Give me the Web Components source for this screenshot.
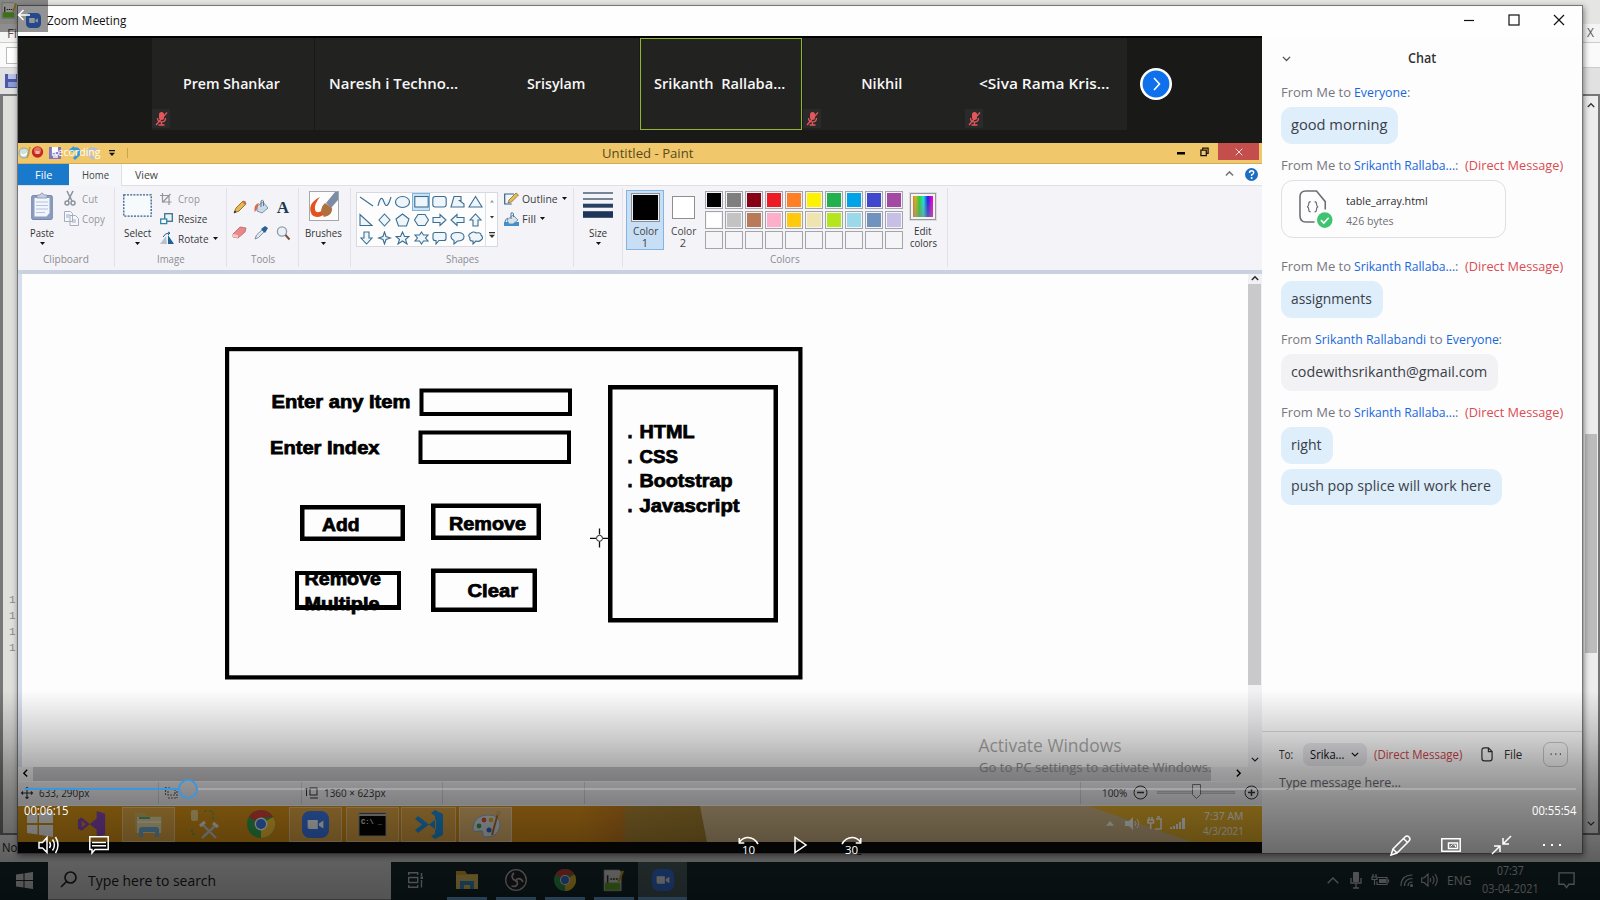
<!DOCTYPE html>
<html lang="en">
<head>
<meta charset="utf-8">
<title>Zoom Meeting</title>
<style>
html,body{margin:0;width:1600px;height:900px;overflow:hidden;font-family:"Open Sans","Noto Sans",sans-serif;font-size:12px}
</style>
</head>
<body>
<desk-top></desk-top>
<script>
const def=(name,html,init)=>customElements.define(name,class extends HTMLElement{
  connectedCallback(){ if(this.shadowRoot)return; const r=this.attachShadow({mode:"open"}); r.innerHTML=typeof html==="function"?html(this):html; if(init)init(this,r); }
});

const ZOOMCAM='<rect x="0" y="0" width="24" height="24" rx="7" fill="#3d7df0"/><path d="M5 8h9v8H6.500Q5 16 5 14.500zM15 11l4-2.500v7L15 13z" fill="#fff"/>';
const CHROME='<circle cx="12" cy="12" r="12" fill="#35a853"/><path d="M12 12L22.400 6A12 12 0 0 1 12 24z" fill="#fcc934"/><path d="M12 12L1.600 6A12 12 0 0 1 22.400 6L12 6.500z" fill="#e2443a"/><circle cx="12" cy="12" r="5.500" fill="#fff"/><circle cx="12" cy="12" r="4.300" fill="#3f7fe8"/>';
const st='fill="none" stroke="currentColor"';
const I={
 zoom:[24,24,ZOOMCAM], chrome:[24,24,CHROME],
 mute:[18,19,'<rect width="18" height="19" fill="#2a2a2a"/><rect x="7" y="3" width="5" height="8" rx="2.500" fill="#e4565c"/><path d="M5.500 9q0 4 4 4t4-4M9.500 13v3M6.500 16h6M4 16L15 3.500" fill="none" stroke="#e4565c" stroke-width="1.300"/>'],
 next:[32,32,'<circle cx="16" cy="16" r="16" fill="#fff"/><circle cx="16" cy="16" r="13.400" fill="#0e71eb"/><path d="M14 10l5.500 6-5.500 6" fill="none" stroke="#fff" stroke-width="1.600"/>'],
 min:[12,12,`<path d="M1 6.500h10" ${st} stroke-width="1.200"/>`],
 max:[12,12,`<rect x="1" y="1" width="10" height="10" ${st} stroke-width="1.200"/>`],
 close:[12,12,`<path d="M1 1l10 10M11 1L1 11" ${st} stroke-width="1.200"/>`],
 chev:[10,6,`<path d="M1 1l4 4 4-4" ${st} stroke-width="1.500"/>`],
 up:[10,6,`<path d="M1 5l4-4 4 4" ${st} stroke-width="1.700"/>`],
 left:[6,10,`<path d="M5 1L1 5l4 4" ${st} stroke-width="1.700"/>`],
 right:[6,10,`<path d="M1 1l4 4-4 4" ${st} stroke-width="1.700"/>`],
 tri:[5,3,'<path d="M0 0h5L2.500 3z" fill="currentColor"/>'],
 triup:[5,3,'<path d="M0 3h5L2.500 0z" fill="currentColor"/>'],
 more:[6,6,'<path d="M0 0h6v1.200H0zM0 2.800h6L3 6z" fill="currentColor"/>'],
 back:[14,12,`<path d="M13 6H2M6.500 1L1.500 6l5 5" ${st} stroke-width="1.500"/>`],
 restore:[10,11,`<path d="M1 3.500h6v6H1zM3 3V1.200h6v6H7.500" ${st} stroke-width="1.400"/>`],
 help:[13,13,'<circle cx="6.500" cy="6.500" r="6.500" fill="#1b6fc2"/><path d="M4.500 5q0-2.300 2.100-2.300T8.700 4.700Q8.700 6 6.600 6.800V8" fill="none" stroke="#fff" stroke-width="1.400"/><circle cx="6.600" cy="9.900" r="1" fill="#fff"/>'],
 qat:[84,16,'<circle cx="6" cy="8" r="5" fill="#cfe0dc" stroke="#8aa5a5"/><path d="M3 9q3 3 6-1" stroke="#fff" stroke-width="1.500" fill="none"/><path d="M12 2l-3 11" stroke="#c89440" stroke-width="1.500"/><circle cx="19.500" cy="7" r="5.700" fill="#c5281f"/><circle cx="19.500" cy="5.500" r="3.500" fill="#e27065"/><rect x="17.500" y="6" width="4" height="3" fill="#f2b2a8"/><rect x="31" y="2" width="12" height="12" fill="#8574bd"/><rect x="34" y="2" width="6" height="5" fill="#fff"/><rect x="35" y="9" width="5" height="4" fill="#d8d4ee"/><path d="M53 5q9-4 8 4l-5 5" fill="none" stroke="#3698d5" stroke-width="3"/><path d="M51 5l5-4v7z" fill="#3698d5"/><path d="M79 5q-9-4-8 4l5 5" fill="none" stroke="#b5bfcf" stroke-width="3"/>'],
 paste:[22,28,'<rect x=".7" y="3.500" width="20.600" height="24" rx="1.500" fill="#8c9dbf" stroke="#7587ad"/><path d="M3.500 6h15v15l-3 3.500h-12z" fill="#f1f5fc"/><path d="M5 10h12M5 13.500h12M5 17h12M5 20.500h9" stroke="#b5c3de"/><path d="M6 3h3q2-4 4 0h3v3H6z" fill="#c8d0df" stroke="#8291ab" stroke-width=".8"/>'],
 cut:[12,15,'<path d="M3 0l5 10M9 0L4 10" stroke="#8d939e" stroke-width="1.600"/><circle cx="3" cy="12" r="2" fill="none" stroke="#8d939e" stroke-width="1.500"/><circle cx="9" cy="12" r="2" fill="none" stroke="#8d939e" stroke-width="1.500"/>'],
 copy:[15,15,'<path d="M.5.500h6l2 2v8h-8zM6 4.500h5.500l3 3v7H6z" fill="#f5f7fb" stroke="#a5adbf"/><path d="M2 4h4M2 6h3M8 9h4M8 11h4" stroke="#9eacc8"/>'],
 select:[29,23,'<rect x=".8" y=".8" width="27.400" height="21.400" fill="#f7fafd" stroke="#335f86" stroke-width="1.300" stroke-dasharray="2 1.200"/>'],
 crop:[12,12,`<path d="M2.500 0v9h9M0 2.500h9V12M2.500 9.500l8-8.500" ${st} stroke-width="1.200"/>`],
 resize:[13,12,'<rect x="4.700" y=".7" width="7.600" height="7.600" fill="#e8f4fa" stroke="#3c7087" stroke-width="1.300"/><rect x=".7" y="6" width="6" height="4.600" fill="#fff" stroke="#2f84ae" stroke-width="1.300"/>'],
 rotate:[14,13,'<path d="M7 12H0L6 4z" fill="#b9c2cc"/><path d="M8 12V3l6 9z" fill="#1f6299"/><path d="M3 5q2-4 6-4M8 0l2 1-2 2" fill="none" stroke="#1f6299"/>'],
 pencil:[14,14,'<path d="M1 13l2-5 7-7q3 0 3 3l-7 7z" fill="#eab94d" stroke="#77601e" stroke-width=".8"/><path d="M9 2l3 3 1-3-2-1z" fill="#d9695d"/><path d="M1 13l.7-2.500L3.500 12z" fill="#222"/>'],
 bucket:[15,14,'<path d="M3 6l6-4 5 6-6 5-5-2z" fill="#c9dbe9" stroke="#6f8ca5" stroke-width=".9"/><path d="M7 7V1q1.500-1.500 2.500 0v5" fill="none" stroke="#61758a"/><path d="M5 3Q1 4 .5 8v4q3-2 3.500-7z" fill="#db6b45"/>'],
 letA:[14,14,'<text x="7" y="12.800" text-anchor="middle" font-family="Liberation Serif,serif" font-weight="700" font-size="17" fill="#24384d">A</text>'],
 eraser:[15,13,'<path d="M1 8l7-7 6 1-1 4-7 6-5-1z" fill="#e98789" stroke="#b96568" stroke-width=".8"/><path d="M1 8l5 1v3l-5-1z" fill="#f6c4c2"/>'],
 picker:[14,14,'<path d="M1 13l1.500-4L8 4l2 2-5.500 5.500z" fill="#dbe9f2" stroke="#75879c" stroke-width=".9"/><path d="M7 3l4 4 3-5-3-2z" fill="#276297"/>'],
 lens:[14,14,'<circle cx="6" cy="5.500" r="4.600" fill="#e9f1f7" stroke="#8c9aa9" stroke-width="1.300"/><path d="M9.500 9l4 4.500" stroke="#74543f" stroke-width="2"/>'],
 brush:[30,30,'<rect x=".5" y=".5" width="29" height="29" fill="#fdfdfd" stroke="#a5a8ab"/><path d="M11 6Q-3 13 3 24q6 5 14-2l-2-4Q8 24 6 19 5 13 11 6z" fill="#e2531f"/><path d="M29 1h-3L17 12l5 5 7-8z" fill="#7c8ca5"/><path d="M16 12q-7 6-1 14 9-2 8-9z" fill="#af713f"/>'],
 outline:[15,13,'<path d="M10 2H.7v10h7" fill="none" stroke="#2f6387" stroke-width="1.200"/><path d="M4 11l1-3 7-7 2.500 2-7 7z" fill="#e9ba55" stroke="#7a642c" stroke-width=".7"/>'],
 fill:[16,14,'<rect y="10" width="15" height="4" fill="#3f8fd1"/><path d="M3 8l6-5 5 5-5 4H5z" fill="#d5e3ed" stroke="#7189a0" stroke-width=".9"/><path d="M7 7V1q2-1 2.500 1v3M4 6Q1 7 1 10" fill="none" stroke="#55799b"/>'],
 size:[30,28,'<path d="M0 1h30M0 7h30" stroke="#4a6078" stroke-width="1.600"/><path d="M0 13.700h30" stroke="#263f63" stroke-width="4"/><path d="M0 22.500h30" stroke="#1d3558" stroke-width="6.600"/>'],
 file:[36,40,'<path d="M27 21v-8L18 2H7Q1 2 1 8v19q0 7 6 7h9" fill="none" stroke="#6d6d78" stroke-width="1.600"/><path d="M12 13q-2 0-2 2.500T8.300 18.500Q10 18.500 10 21t2 2.500M16 13q2 0 2 2.500t1.700 3Q18 18.500 18 21t-2 2.500" fill="none" stroke="#6d6d78" stroke-width="1.200"/><circle cx="26.500" cy="32" r="8" fill="#3fc371"/><path d="M22.500 32l3 3 5-5.500" fill="none" stroke="#fff" stroke-width="1.600"/>'],
 page:[13,16,`<path d="M8 1H3.500Q1 1 1 3.500v9Q1 15 3.500 15h6q2.500 0 2.500-2.500V5zM8 1v4h4" ${st} stroke-width="1.300"/>`],
 cross:[12,12,`<path d="M6 0v12M0 6h12M4.500 2L6 .5 7.500 2M4.500 10L6 11.500 7.500 10M2 4.500L.5 6 2 7.500M10 4.500L11.500 6 10 7.500" ${st} stroke-width="1.100"/>`],
 selsz:[13,12,`<path d="M.5 0v9M0 1h5M3 4v4h7V2M3 11h9M12 4v7" ${st} stroke-width="1.200" stroke-dasharray="2 1"/>`],
 imgsz:[13,12,`<rect x="5" y="1" width="7" height="7" ${st}/><path d="M1.500 1v8M0 2.500L1.500 1 3 2.500M5 11h8" ${st}/>`],
 minus:[15,15,`<circle cx="7.500" cy="7.500" r="6.500" ${st}/><path d="M4 7.500h7" ${st} stroke-width="1.500"/>`],
 plus:[15,15,`<circle cx="7.500" cy="7.500" r="6.500" ${st}/><path d="M4 7.500h7M7.500 4v7" ${st} stroke-width="1.500"/>`],
 win8:[26,26,'<path d="M0 4l10.500-1.500V12H0zM12 2.300L26 0v12H12zM0 14h10.500v9.500L0 22zM12 14h14v12l-14-2.300z" fill="#fff"/>'],
 vs:[32,28,'<path d="M1 9l4-2 16 13V8L5 21l-4-2zM21 0l9 3v22l-9 3z" fill="#8e4bbd"/><path d="M5 10.500v7l4.500-3.500z" fill="#d18f31"/>'],
 expl:[30,27,'<path d="M1 2h10l3 3h14v17H1z" fill="#d9bd6a"/><path d="M3 6h24v16H3z" fill="#f4e2a5"/><path d="M5 7h11" stroke="#5fae8c" stroke-width="2"/><path d="M3 11h24" stroke="#fff6cf" stroke-width="2"/><path d="M5 26v-7q0-3 3-3h14q3 0 3 3v7h-4v-5H9v5z" fill="#6eb3dd"/>'],
 tools:[28,30,'<rect x="1" y="1" width="7" height="11" rx="2" fill="#f1d98b"/><path d="M14 2h9v9M2 20v5h5" fill="none" stroke="#65a551" stroke-width="1.400" stroke-dasharray="3 2"/><path d="M12 15l14 14M26 16L12 29" stroke="#cdd3d8" stroke-width="2.400"/><path d="M10 17l5-4M23 14l5 4" stroke="#eef2f5" stroke-width="3"/>'],
 cmd:[27,23,'<rect width="27" height="23" fill="#050505" stroke="#999"/><path d="M0 2h27" stroke="#b7b7b7" stroke-width="2"/><text x="2" y="11" font-family="Liberation Mono,monospace" font-weight="700" font-size="7" fill="#eee">C:\\ _</text>'],
 code:[29,29,'<path d="M1 9l3-3 18 14v-11L4 23l-3-3L8 14.500zM21 0l8 4v21l-8 4-4-3 4-2V6l-4-3z" fill="#2196e3"/>'],
 palette:[30,28,'<path d="M2 17Q4 5 17 5t12 11q-2 11-13 11-5 0-4-4 0-3-4-2Q1 23 2 17z" fill="#e5eef3" stroke="#9bb5c1"/><circle cx="8" cy="16" r="2.400" fill="#3ea35b"/><circle cx="13" cy="10" r="2.400" fill="#e0593a"/><circle cx="20" cy="10" r="2.400" fill="#eab42f"/><circle cx="18" cy="20" r="2.500" fill="#346fc8"/><path d="M27 3L21 25" stroke="#b6752d" stroke-width="2"/><path d="M25 5q-1-4 3-5 4 3 0 6z" fill="#e2b36e"/>'],
 spk8:[15,13,`<path d="M0 4h4l4-4v13L4 9H0z" fill="#fff"/><path d="M10 4q2 2.500 0 5M12 2q3.500 4.500 0 9" fill="none" stroke="#fff"/>`],
 plug:[14,14,'<path d="M1 1v3M4 1v3M0 4h5.500v3H0zM2.700 7v6M8 3h5v10H7M9 1h3" fill="none" stroke="#fff" stroke-width="1.600"/>'],
 sig:[15,11,'<path d="M0 9h2v2H0zM3 8h2v3H3zM6 6h2v5H6zM9 4h2v7H9zM12 0h3v11h-3z" fill="#fff"/>'],
 win10:[17,17,'<path d="M0 2.500L7.500 1.500V8H0zM8.500 1.300L17 0v8H8.500zM0 9h7.500v6.500L0 14.500zM8.500 9H17v8l-8.500-1.300z" fill="#e8e8e8"/>'],
 search:[17,17,`<circle cx="10.500" cy="6.500" r="5.500" ${st} stroke-width="1.600"/><path d="M6.500 10.500L1 16" ${st} stroke-width="1.600"/>`],
 task:[16,16,`<path d="M.7 3V.7h9V3M.7 5.500h9v5h-9zM.7 13v2.300h9V13M13.500 1v3M13.500 8v7.500" ${st} stroke-width="1.400"/><path d="M12.500 4.500h2.500v2.500h-2.500z" fill="currentColor"/>`],
 folder:[22,18,'<path d="M0 0h9l2 3h11v15H0z" fill="#f3b83a"/><path d="M0 4h22v14H0z" fill="#ffd86b"/><path d="M4 18V10h14v8h-4v-4H8v4z" fill="#3c9be0"/>'],
 obs:[22,22,'<circle cx="11" cy="11" r="10.300" fill="#26262a" stroke="#c9c9cd" stroke-width="1.300"/><path d="M9 4q-3.500 3-.5 6.500 2 1.500 3 .5M18 13q-2-4.500-6-3-1.500 1-1 3M6.500 17q5 1.500 6-2.500 0-2.500-1.500-3.500" fill="none" stroke="#c9c9cd" stroke-width="1.700"/>'],
 npp:[22,24,'<path d="M0 1h17l2 2v21H0z" fill="#f1f3ed" stroke="#999" stroke-width=".8"/><path d="M1 15h17v8H1z" fill="#6cc02e"/><path d="M4 7v8M7 11h2M10 11h2M13 11h2" stroke="#333" stroke-width="1.700"/><path d="M21 2l-5 12" stroke="#d5a931" stroke-width="2.500"/>'],
 caret:[12,7,`<path d="M.7 6.300L6 1l5.300 5.300" ${st} stroke-width="1.300"/>`],
 mic:[12,17,`<rect x="3" y="0" width="6" height="10" rx="1" fill="currentColor"/><path d="M1 6v5h10V6M6 11v5M3 16h6" ${st} stroke-width="1.300"/>`],
 batt:[17,12,`<path d="M6 3.500h9v7H5v-3M16.500 5.500v3M1 0v3M4 0v3M0 3h5v2.500H0zM2.500 6v5" ${st} stroke-width="1.200"/><path d="M7 5h7v4H7z" fill="currentColor"/>`],
 wifi:[14,13,`<path d="M1 12Q1 1 12.500 1M4.500 12Q4.500 4.500 12.500 4.500M8 12q0-4 4.500-4" ${st} stroke-width="1.200"/><circle cx="11.500" cy="11.500" r="1.500" fill="currentColor"/>`],
 spk10:[17,14,`<path d="M.7 5H3l4-4v12L3 9.500H.7zM9 5q1.500 2 0 4M11.500 3q3 4 0 8M14 1q4.500 6 0 12" ${st} stroke-width="1.100"/>`],
 notif:[18,18,`<path d="M1 1h16v12H11.500L9 16.500 6.500 13H1z" ${st} stroke-width="1.400"/>`],
 vol:[21,18,`<path d="M1 6.500h3.500L9 1.500v15L4.500 12H1zM11.500 6q2 3 0 6M14.500 3.500q3.800 5.500 0 11M17.500 1q5 8 0 16" ${st} stroke-width="1.500"/>`],
 cc:[20,19,`<path d="M.8.800h18.400v12.600H6L3 17v-3.600H.8zM3 6.500h14M3 9.800h14" ${st} stroke-width="1.500"/>`],
 b10:[21,19,`<path d="M20 8Q16 1 9 1.500 4.500 2 1.500 6M1.300 2v5h5" ${st} stroke-width="1.600"/><text x="10.500" y="18" text-anchor="middle" font-size="11.500" textLength="13" fill="currentColor" font-family="Open Sans,Noto Sans,sans-serif">10</text>`],
 play:[13,18,`<path d="M1 1.500v15l11-7.500z" ${st} stroke-width="1.500"/>`],
 f30:[21,19,`<path d="M1 8Q5 1 12 1.500q4.500.500 7.500 4.500M19.700 2v5h-5" ${st} stroke-width="1.600"/><text x="10.500" y="18" text-anchor="middle" font-size="11.500" textLength="13" fill="currentColor" font-family="Open Sans,Noto Sans,sans-serif">30</text>`],
 pen:[21,21,`<path d="M1 20l2-6L15 2q2-2 4 0t0 4L7 18zM3 14l4 4M13.500 3.500l4 4" ${st} stroke-width="1.500"/>`],
 pip:[20,14,`<path d="M.8.800h18.400v12.400H.8zM7.500 5h9v5.500h-9z" ${st} stroke-width="1.500"/><path d="M9.500 8.500l2-2M12.500 7h2v2" ${st}/>`],
 shrink:[21,20,`<path d="M20 1l-8 8M12 3v6h6M1 19l8-8M3 11h6v6" ${st} stroke-width="1.500"/>`],
 dots:[19,4,'<path d="M1 1h2v2H1zM9 1h2v2H9zM17 1h2v2h-2z" fill="currentColor"/>'],
 saveic:[14,14,'<path d="M0 0h14v14H0z" fill="#4a5aa8"/><path d="M3 0h8v5H3z" fill="#b9c2e8"/><path d="M3 8h9v5H3z" fill="#8f9bd1"/>'],
};
def("ui-icon",e=>{const[w,h,c]=I[e.getAttribute("name")];const k=+(e.getAttribute("w")||w);return `<style>:host{display:inline-block;flex:none;width:${k}px;height:${k*h/w}px}svg{display:block;overflow:visible}</style><svg width="${k}" height="${k*h/w}" viewBox="0 0 ${w} ${h}">${c}</svg>`});

/* --- conference header --- */
def("zoom-title",`<style>:host{display:flex;height:30px;align-items:center;padding:0 17px 2px 8px;box-sizing:border-box;background:#fefefe;color:#111}
ui-label{margin-left:6px;margin-right:auto;font-size:12.500px}.b{display:flex;gap:33px}</style>
<ui-icon name="zoom" w="15"></ui-icon><ui-label w="79">Zoom Meeting</ui-label><div class="b"><ui-icon name="min"></ui-icon><ui-icon name="max"></ui-icon><ui-icon name="close"></ui-icon></div>`);
def("zoom-tile",e=>`<style>:host{display:flex;position:relative;width:162px;height:92px;box-sizing:border-box;background:#222221;align-items:center;justify-content:center;color:#f7f7f7;font-weight:600;font-size:14.500px;padding:0 4px 2px 0}
:host([active]){border:1.500px solid #8fb72e}ui-icon{position:absolute;left:0;bottom:2px}</style>
<ui-label w="${e.getAttribute("w")}"><slot></slot></ui-label>${e.hasAttribute("muted")?'<ui-icon name="mute"></ui-icon>':''}`);
def("zoom-strip",`<style>:host{display:flex;height:107px;box-sizing:border-box;background:#191918;border-top:2px solid #020202;padding-left:134px;gap:.7px}
ui-icon{margin:30px 0 0 12px}</style>
<zoom-tile w="97" muted>Prem Shankar</zoom-tile><zoom-tile w="129">Naresh i Techno...</zoom-tile><zoom-tile w="58">Srisylam</zoom-tile><zoom-tile w="131" active>Srikanth&nbsp; Rallaba...</zoom-tile><zoom-tile w="41" muted>Nikhil</zoom-tile><zoom-tile w="130" muted>&lt;Siva Rama Kris...</zoom-tile><ui-icon name="next"></ui-icon>`);

/* --- paint --- */
def("paint-title",`<style>:host{display:grid;grid-template-columns:1fr 100px 1fr;align-items:center;height:20.500px;box-sizing:border-box;background:#f0c86b;border-bottom:1px solid #d2ac58;color:#5a4720}
.q{display:flex;align-items:center;gap:7px;color:#111;position:relative;height:20px}.q ui-label{position:absolute;left:33px;top:1px;color:#fff;font-size:11px}.q b{width:1px;height:10px;background:#cba34e;margin-left:5px}
.w{display:flex;justify-content:flex-end;align-items:flex-start;height:20px;color:#1a1408;padding-right:3px}.w span{display:flex;align-items:center;justify-content:center;height:17px}.x{background:#c44e4c;color:#fff;width:41px}.c{text-align:center;font-size:13px;padding-left:12px}</style>
<div class="q"><ui-icon name="qat"></ui-icon><ui-label w="50">Recording</ui-label><ui-icon name="more"></ui-icon><b></b></div>
<div class="c"><ui-label w="91">Untitled - Paint</ui-label></div>
<div class="w"><span style="width:20px;padding-top:2px"><svg width="8" height="3"><path d="M0 0h8v2.500H0z"/></svg></span><span style="width:27px"><ui-icon name="restore" w="9"></ui-icon></span><span class="x"><ui-icon name="close" w="8"></ui-icon></span></div>`);
def("paint-tabs",`<style>:host{display:flex;height:22px;background:#fdfdfe;border-bottom:1px solid #dde0e5;box-sizing:border-box;font-size:11px;color:#444}
div{display:flex;align-items:center;justify-content:center}.f{width:51px;background:#1979ca;color:#fff}.h{width:53px;background:#f5f6fa;border-right:1px solid #dde0e5;height:22px;box-sizing:border-box}.v{width:48px}.r{margin-left:auto;gap:11px;padding-right:4px;color:#777}</style>
<div class="f"><ui-label w="17">File</ui-label></div><div class="h"><ui-label w="27">Home</ui-label></div><div class="v"><ui-label w="23">View</ui-label></div><div class="r"><ui-icon name="up" w="9"></ui-icon><ui-icon name="help"></ui-icon></div>`);
def("ribbon-group",e=>`<style>:host{display:flex;flex-direction:column;box-sizing:border-box;border-right:1px solid #e1e2e8;height:79px;margin-top:2px;flex:none}
.c{display:flex;height:64px}.l{height:16px;display:flex;justify-content:center;align-items:center;color:#8c8c90;font-size:11px;padding-top:1px}</style>
<div class="c"><slot></slot></div><div class="l">${e.hasAttribute("label")?`<ui-label w="${e.getAttribute("lw")}">${e.getAttribute("label")}</ui-label>`:''}</div>`);
def("big-tool",e=>`<style>:host{display:flex;flex-direction:column;align-items:center;color:#333;font-size:11px;flex:none}
.i{height:32px;display:flex;align-items:center}.t{height:12px;line-height:12px;margin-top:5px}.d{color:#111;height:10px;display:flex;align-items:center}.t,.d{text-align:center}</style>
<div class="i"><ui-icon name="${e.getAttribute("icon")}"></ui-icon></div><div class="t"><ui-label w="${e.getAttribute("w")}"><slot></slot></ui-label></div><div class="d"><ui-icon name="tri"></ui-icon></div>`);
def("small-tool",e=>`<style>:host{display:flex;align-items:center;height:20px;color:#3b3b3f;font-size:11px}:host([off]){color:#949499}.i{width:18px;display:flex}ui-label+ui-icon{margin-left:4px;color:#111}</style>
<div class="i"><ui-icon name="${e.getAttribute("icon")}"></ui-icon></div><ui-label w="${e.getAttribute("w")}"><slot></slot></ui-label>${e.hasAttribute("drop")?'<ui-icon name="tri"></ui-icon>':''}`);
const shapes=['<path d="M1 2l13 9"/>','<path d="M1 11Q4-2 7 7t7-5"/>','<ellipse cx="7.500" cy="7" rx="7" ry="5.500"/>','<rect x=".8" y="1.500" width="13.400" height="10.500"/>','<rect x=".8" y="1.500" width="13.400" height="10.500" rx="2.500"/>','<path d="M4 1.500h7v4H9.500L14 9v3H1z"/>','<path d="M7.500 1.500L14 12H1z"/>',
'<path d="M1 1.500v11h12z"/>','<path d="M7.500 1l5.500 6-5.500 6L2 7z"/>','<path d="M7.500 1L14 6l-2.500 7h-8L1 6z"/>','<path d="M4 1.500h7L14.500 7 11 12.500H4L.5 7z"/>','<path d="M1 4.500h7V1.500L14 7l-6 5.500v-3H1z"/>','<path d="M14 4.500H7V1.500L1 7l6 5.500v-3h7z"/>','<path d="M5 13V7H2l5.500-6L13 7h-3v6z"/>',
'<path d="M5 1v6H2l5.500 6L13 7h-3V1z"/>','<path d="M7.500 1L9 5.500 13.500 7 9 8.500 7.500 13 6 8.500 1.500 7 6 5.500z"/>','<path d="M7.500 1l2 4.500H14l-3.500 3L12 13l-4.500-3L3 13l1.500-4.500L1 5.500h4.500z"/>','<path d="M7.500 1l2 3H14l-2.500 3L14 10H9.500l-2 3-2-3H1l2.500-3L1 4h4.500z"/>','<path d="M3 1.500h9q2 0 2 2v4q0 2-2 2H7L4 13V9.500H3q-2 0-2-2v-4q0-2 2-2z"/>','<path d="M7.500 1.500q6.500 0 6.500 4.200T7.500 10L4 13V9.500Q1 8 1 5.500q0-4 6.500-4z"/>','<path d="M3 2q3-2 5 0 5-1 5 2 3 3 0 5-2 2-5 1l-3 3V10Q1 10 2 7-1 4 3 2z"/>'];
def("shape-gallery",`<style>:host{display:flex;width:142px;height:55px;border:1px solid #d6d9df;box-sizing:border-box;background:#fdfdfe;flex:none}
.g{display:grid;grid-template-columns:repeat(7,18.300px);grid-auto-rows:18px;width:128px}.g div{display:flex;align-items:center;justify-content:center}.g .on{background:#cbe4f8;outline:1px solid #81b2dc;outline-offset:-1px}
svg{fill:#eef6fb;stroke:#3c6e92;stroke-width:1.100}.s{border-left:1px solid #dde0e5;flex:1;display:flex;flex-direction:column;align-items:center;justify-content:space-around;color:#333}</style>
<div class="g">${shapes.map((s,i)=>`<div class="${i==3?'on':''}"><svg width="15" height="14">${s}</svg></div>`).join("")}</div><div class="s"><ui-icon name="triup" w="4" style="color:#999"></ui-icon><ui-icon name="tri" w="4"></ui-icon><ui-icon name="more"></ui-icon></div>`);
const pal="#000000 #7f7f7f #880015 #ed1c24 #ff7f27 #fff200 #22b14c #00a2e8 #3f48cc #a349a4 #ffffff #c3c3c3 #b97a57 #ffaec9 #ffc90e #efe4b0 #b5e61d #99d9ea #7092be #c8bfe7 - - - - - - - - - -".split(" ");
def("color-grid",`<style>:host{display:grid;grid-template-columns:repeat(10,18px);grid-auto-rows:18px;gap:2px;flex:none}i{box-sizing:border-box;border:1px solid #a3a5a9;padding:1px;background-clip:content-box}</style>${pal.map(c=>`<i style="background-color:${c=="-"?"#f5f5f8":c}"></i>`).join("")}`);
def("color-slot",e=>`<style>:host{display:flex;flex-direction:column;align-items:center;width:38px;height:60px;box-sizing:border-box;border:1px solid transparent;font-size:11px;color:#444;flex:none}:host([on]){background:#c7def5;border-color:#84b5e0}
.s{height:33px;display:flex;align-items:center}i{box-sizing:border-box;border:1px solid #8c8e92;width:23px;height:23px;background:#fff}:host([on]) i{width:29px;height:29px;background:#000;box-shadow:inset 0 0 0 1px #e7eff8;border-width:1.500px}p{margin:0;line-height:12px;height:12px;text-align:center}</style>
<div class="s"><i></i></div><p style="margin-top:1px"><ui-label w="25">Color</ui-label></p><p>${e.getAttribute("n")}</p>`);
def("paint-ribbon",`<style>:host{display:flex;height:84px;background:#f4f4f8;box-sizing:border-box;overflow:hidden}
.col{display:flex;flex-direction:column}.t{display:grid;grid-template-columns:repeat(3,21.500px);grid-auto-rows:26px;place-items:center;padding:6px 0 0 2px}
.e{display:flex;flex-direction:column;align-items:center;font-size:11px;color:#333;margin-left:5px;width:30px}.e i{width:26px;height:27px;box-sizing:border-box;border:1px solid #999;outline:1px solid #ddd;margin:5px 0 5px;background:linear-gradient(transparent 20%,#8888 95%),linear-gradient(90deg,#d44,#d8b020,#3c3 35%,#2dd 52%,#22d 70%,#e0d 88%,#e22);background-clip:content-box;padding:2px}.e p{margin:0;height:12px;line-height:12px}</style>
<ribbon-group label="Clipboard" lw="46" style="width:97px"><big-tool icon="paste" w="24" style="margin:2px 0 0 12px">Paste</big-tool><div class="col" style="margin:1px 0 0 10px"><small-tool icon="cut" w="16" off>Cut</small-tool><small-tool icon="copy" w="23" off>Copy</small-tool></div></ribbon-group>
<ribbon-group label="Image" lw="28" style="width:112px"><big-tool icon="select" w="27" style="margin:2px 0 0 8px">Select</big-tool><div class="col" style="margin:1px 0 0 8px"><small-tool icon="crop" w="22" off>Crop</small-tool><small-tool icon="resize" w="29">Resize</small-tool><small-tool icon="rotate" w="31" drop>Rotate</small-tool></div></ribbon-group>
<ribbon-group label="Tools" lw="24" style="width:72px"><div class="t"><ui-icon name="pencil"></ui-icon><ui-icon name="bucket"></ui-icon><ui-icon name="letA"></ui-icon><ui-icon name="eraser"></ui-icon><ui-icon name="picker"></ui-icon><ui-icon name="lens"></ui-icon></div></ribbon-group>
<ribbon-group style="width:52px"><big-tool icon="brush" w="37" style="margin:2px 0 0 6px">Brushes</big-tool></ribbon-group>
<ribbon-group label="Shapes" lw="33" style="width:223px"><shape-gallery style="margin:4px 0 0 5px"></shape-gallery><div class="col" style="margin:1px 0 0 6px"><small-tool icon="outline" w="36" drop>Outline</small-tool><small-tool icon="fill" w="14" drop>Fill</small-tool></div></ribbon-group>
<ribbon-group style="width:49px"><big-tool icon="size" w="18" style="margin:2px 0 0 9px">Size</big-tool></ribbon-group>
<ribbon-group label="Colors" lw="30" style="width:325px"><color-slot n="1" on style="margin:2px 0 0 3px"></color-slot><color-slot n="2" style="margin-top:2px"></color-slot><color-grid style="margin:3px 0 0 3px;height:58px"></color-grid><div class="e"><i></i><p><ui-label w="18">Edit</ui-label></p><p><ui-label w="27">colors</ui-label></p></div></ribbon-group>`);

/* free drawing; coordinates are canvas pixels */
const T=(x,y,w,t)=>`<text x="${x}" y="${y}" textLength="${w}" lengthAdjust="spacingAndGlyphs">${t}</text>`;
const R=(x,y,x2,y2,s=4.500)=>`<rect x="${x+s/2}" y="${y+s/2}" width="${x2-x-s}" height="${y2-y-s}" stroke-width="${s}"/>`;
def("paint-canvas",`<style>:host{display:block;background:#fdfdfd;overflow:hidden}svg{display:block}rect{fill:none;stroke:#000}text{font:700 18px "Liberation Sans",Arial,sans-serif;fill:#000;stroke:#000;stroke-width:.75}.w{font-family:"Open Sans",sans-serif;font-weight:400;fill:#8e8e8e;fill-opacity:.75;stroke:none}</style>
<svg width="1226" height="493" viewBox="22 274 1226 493"><defs><clipPath id="k"><path d="M290 575h120v50H290z"/></clipPath></defs>
${R(225,347,802.500,679.500,4.200)}${R(419.500,388.500,572,416,4)}${R(418.500,430.500,571,464,4)}${R(300,505,405,541)}${R(431,503.500,541,540)}${R(295,571,401,610,4)}${R(431,568.500,537,612)}${R(608,385,778,622.500)}
${T(271.500,408,139,'Enter any Item')}${T(270,454.300,109.500,'Enter Index')}${T(322,530.700,37.500,'Add')}${T(449,530,77,'Remove')}${T(467.500,597,50.500,'Clear')}
<g clip-path="url(#k)">${T(304.500,585,76.500,'Remove')}${T(304.500,610,75,'Multiple')}</g>
<path d="M297 605h102v4H297z"/>
${[['HTML',55,438],['CSS',38.500,462.500],['Bootstrap',93,487.200],['Javascript',100,512]].map(a=>`<text x="627.500" y="${a[2]}">.</text>`+T(639.500,a[2],a[1],a[0])).join("")}
<path d="M599.500 528.500v6M599.500 541.500v6M590 538.300h6M603 538.300h6" stroke="#111" stroke-width="1.300"/><circle cx="599.500" cy="538.300" r="3" fill="#fff" stroke="#222"/>
<text class="w" x="978.500" y="752" style="font-size:19px" textLength="143" lengthAdjust="spacingAndGlyphs">Activate Windows</text></svg>`);
def("paint-view",`<style>:host{display:grid;grid-template-columns:4px 1226px 14px;grid-template-rows:493px 14px;height:511px;box-sizing:border-box;border-top:4px solid #c9d0e0;background:#d7deeb;position:relative}
.v{display:flex;flex-direction:column;align-items:center;background:#f1f1f4;color:#222}.v b{width:13px;height:401px;background:#c9c8cb;margin:1px 1px 0 0}.v ui-icon:first-child{margin-top:2px;height:7px}.v ui-icon:last-child{margin-top:auto;margin-bottom:5px}
.h{grid-column:1/4;display:flex;align-items:center;background:#f0f0f2;padding-left:5px}.h b{height:14px;width:1178px;background:#c9c7ca;margin:0 25px 0 5px}
ui-label{position:absolute;left:961px;top:484px;font-size:13.500px;color:#929292}</style>
<i></i><paint-canvas></paint-canvas><div class="v"><ui-icon name="up" w="8"></ui-icon><b></b><ui-icon name="chev" w="8"></ui-icon></div>
<div class="h"><ui-icon name="left" w="5"></ui-icon><b></b><ui-icon name="right" w="5"></ui-icon></div><ui-label w="232">Go to PC settings to activate Windows.</ui-label>`);
def("paint-status",`<style>:host{display:flex;height:25.500px;box-sizing:border-box;background:#f0f0f3;border-top:1px solid #fafafa;border-bottom:1.500px solid #fff;color:#333;font-size:11.500px}
div{display:flex;align-items:center;gap:5.500px;box-sizing:border-box;border-right:1px solid #d0d2d6;padding-left:3px;flex:none;height:22px}.z{border:0;gap:6px;padding:0 4px 0 21px}.s{position:relative;width:78px;height:3px;background:#d8d8dc;border:1px solid #c2c2c6;box-sizing:border-box;margin:0 3px}.s svg{position:absolute;left:34px;top:-8px}</style>
<div style="width:141px"><ui-icon name="cross"></ui-icon><ui-label w="50">633, 290px</ui-label></div><div style="width:143px;padding-left:6px;color:#666"><ui-icon name="selsz"></ui-icon></div><div style="width:141px"><ui-icon name="imgsz"></ui-icon><ui-label w="62">1360 × 623px</ui-label></div><div style="width:142px"></div><div style="width:496px"></div>
<div class="z"><ui-label w="25">100%</ui-label><ui-icon name="minus"></ui-icon><span class="s"><svg width="9" height="15"><path d="M.5.500h8v10l-4 4-4-4z" fill="#f1f1f3" stroke="#777"/></svg></span><ui-icon name="plus"></ui-icon></div>`);
def("remote-bar",`<style>:host{display:flex;height:36px;align-items:center;position:relative;overflow:hidden;background:linear-gradient(90deg,#e09b18,#df931b 45%,#cd811f 48.500%,#b48b36 49%,#a6822e 56%)}
.bg{position:absolute;inset:0;width:1244px;height:36px}div{position:relative;display:flex;align-items:center;justify-content:center;height:35px;box-sizing:border-box;flex:none}.o{background:#fff3;border:1px solid #fff6}.a{background:#fff6}
.clk{margin-left:auto;flex-direction:column;width:60px;color:#fff;font-size:11px;line-height:15.500px;padding-bottom:2px}</style>
<svg class="bg"><path d="M682 0h562v36H689z" fill="#d6bb8c"/><path d="M1070 0h174v36h-70z" fill="#e8b32c"/></svg>
<div style="width:44px"><ui-icon name="win8"></ui-icon></div><div style="width:60px"><ui-icon name="vs" w="30"></ui-icon></div><div class="o" style="width:53px"><ui-icon name="expl"></ui-icon></div><div style="width:58px"><ui-icon name="tools"></ui-icon></div><div style="width:55px"><ui-icon name="chrome" w="28"></ui-icon></div><div class="o" style="width:53px;margin-left:1px"><ui-icon name="zoom" w="27"></ui-icon></div><div class="o" style="width:53px;margin-left:4px"><ui-icon name="cmd"></ui-icon></div><div class="o" style="width:55px;margin-left:2px"><ui-icon name="code"></ui-icon></div><div class="o a" style="width:53px;margin-left:3px"><ui-icon name="palette"></ui-icon></div>
<div style="margin-left:594px;gap:8px;color:#fff;padding-bottom:2px"><ui-icon name="triup" w="8"></ui-icon><ui-icon name="spk8" style="margin-left:3px"></ui-icon><ui-icon name="plug"></ui-icon><ui-icon name="sig"></ui-icon></div><div class="clk" style="margin-right:9px"><ui-label w="39">7:37 AM</ui-label><ui-label w="41">4/3/2021</ui-label></div>`);

/* --- chat --- */
def("chat-from",e=>{const d=e.hasAttribute("direct"),a=e.getAttribute("to");return `<style>:host{display:flex;height:20px;align-items:center;font-size:13px;color:#77777f;white-space:pre}b{font-weight:400;color:#1767dc}i{font-style:normal;color:#da4b52;margin-left:7px}</style>
${e.hasAttribute("from")?`<ui-label w="33.500">From </ui-label><b><ui-label w="111">${e.getAttribute("from")}</ui-label></b><ui-label w="20">&nbsp;to </ui-label>`:'<ui-label w="73">From Me to </ui-label>'}<b><ui-label w="${d?101:53}">${a}</ui-label></b>:${d?'<i><ui-label w="98">(Direct Message)</ui-label></i>':''}`});
def("chat-bubble",e=>`<style>:host{display:flex;align-items:center;width:${e.getAttribute("bw")}px;height:36.500px;padding:0 0 2px 10px;box-sizing:border-box;border-radius:11px;background:#deeefb;color:#3b4048;font-size:14.500px}:host([other]){background:#f2f2f5}</style><ui-label w="${e.getAttribute("w")}"><slot></slot></ui-label>`);
def("chat-file",`<style>:host{display:flex;width:225px;height:58px;box-sizing:border-box;border:1px solid #dfdfe3;border-radius:12px;padding:0 0 1px 17px;align-items:center;gap:12px}div{display:flex;flex-direction:column;height:40px;justify-content:space-between;font-size:11.500px;line-height:20px;color:#2b2b30;padding-top:5px;box-sizing:border-box}ui-label+ui-label{color:#6f6f78}div{height:45px}</style>
<ui-icon name="file" w="35"></ui-icon><div><ui-label w="82">table_array.html</ui-label><ui-label w="48">426 bytes</ui-label></div>`);
def("chat-composer",`<style>:host{display:flex;flex-direction:column;box-sizing:border-box;border-top:1px solid #dcdce0;height:122px;padding:10px 14px 0 17px;font-size:12.500px;color:#333}
.r{display:flex;align-items:center;height:25px}.s{display:flex;align-items:center;justify-content:center;gap:7px;width:64px;height:23px;background:#e9e9ee;border-radius:7px;margin:0 7px 0 9px;color:#111}.d{color:#d2434b}.m{margin-left:auto;width:25px;height:25px;box-sizing:border-box;border:1px solid #c9c9ce;border-radius:7px;display:flex;align-items:center;justify-content:center}p{margin:6px 0 0;color:#6b6b72;font-size:13px}</style>
<div class="r"><ui-label w="14.500">To:</ui-label><span class="s"><ui-label w="34">Srika...</ui-label><ui-icon name="chev" w="8"></ui-icon></span><ui-label class="d" w="88">(Direct Message)</ui-label><ui-icon name="page" w="12" style="margin:0 11px 0 19px"></ui-icon><ui-label w="18.500">File</ui-label><span class="m"><ui-icon name="dots" w="11"></ui-icon></span></div><p><ui-label w="122">Type message here...</ui-label></p>`);
def("chat-panel",`<style>:host{display:flex;flex-direction:column;background:#fdfdfd;width:320px}.h{display:grid;grid-template-columns:32px 1fr 32px;align-items:center;justify-items:center;height:45px;font-weight:600;font-size:13.500px;color:#333;padding:0 0 2px 8px;box-sizing:border-box;margin-right:8px}.h ui-icon{color:#555;margin-top:2px}
.m{flex:1;padding:1px 0 0 19px;display:flex;flex-direction:column}chat-bubble,chat-file{margin:5px 0 11.500px}</style>
<div class="h"><ui-icon name="chev" w="9"></ui-icon><ui-label w="28">Chat</ui-label></div>
<div class="m"><chat-from to="Everyone"></chat-from><chat-bubble bw="117" w="96">good morning</chat-bubble>
<chat-from to="Srikanth Rallaba..." direct></chat-from><chat-file style="margin-bottom:18px"></chat-file>
<chat-from to="Srikanth Rallaba..." direct></chat-from><chat-bubble bw="102" w="81">assignments</chat-bubble>
<chat-from from="Srikanth Rallabandi" to="Everyone"></chat-from><chat-bubble bw="217" w="196" other>codewithsrikanth@gmail.com</chat-bubble>
<chat-from to="Srikanth Rallaba..." direct></chat-from><chat-bubble bw="52" w="31" style="margin-bottom:0">right</chat-bubble><chat-bubble bw="221" w="200">push pop splice will work here</chat-bubble></div><chat-composer></chat-composer>`);

def("zoom-window",`<style>:host{position:absolute;left:17px;top:5px;width:1566px;height:849px;box-sizing:border-box;border:1px solid #777;background:#fdfdfd;box-shadow:1px 2px 6px #0007;display:flex;flex-direction:column}.b{display:flex;flex:1;min-height:0}.s{width:1244px;background:#0b0b0b;display:flex;flex-direction:column}</style>
<zoom-title></zoom-title><div class="b"><div class="s"><zoom-strip></zoom-strip><paint-title></paint-title><paint-tabs></paint-tabs><paint-ribbon></paint-ribbon><paint-view></paint-view><paint-status></paint-status><remote-bar></remote-bar></div><chat-panel></chat-panel></div>`);

/* editor window left open behind the meeting */
def("editor-window",`<style>:host{display:flex;flex-direction:column;height:862px;background:#f2f2f2;color:#555;font-size:13px;overflow:hidden}
.t{height:24px;background:#e5e6e4;padding:2px 0 0 2px;box-sizing:border-box}.m{display:flex;justify-content:space-between;height:18px;line-height:18px;padding:0 6px 0 7px;background:#f4f4f4;border-bottom:1px solid #ccc}.q{height:24px;background:#fafafa;border-bottom:1px solid #ccc;display:flex;align-items:center;padding-left:6px}.q i{width:16px;height:15px;background:#fff;border:1px solid #bbb}.tb{height:26px;background:#e1e1e1;display:flex;align-items:center;padding-left:5px}
.e{display:flex;justify-content:space-between;height:741px;box-sizing:border-box;border:2px solid #777;border-left-width:3px;background:#dfdfdc}.n{padding:496px 0 0 6px;color:#888;font:11px/16px "Liberation Mono",monospace;white-space:pre}.v{width:14px;background:#ededed;display:flex;flex-direction:column;align-items:center;color:#333;padding-top:7px;box-sizing:border-box}.v b{width:12px;height:219px;background:#bcbcbc;margin:326px 0 auto}.f{height:27px;line-height:18px;background:#ededed;padding:4px 0 0 2px;box-sizing:border-box;color:#222;font-size:12px;display:flex}</style>
<div class="t"><ui-icon name="npp" w="15"></ui-icon></div><div class="m"><span>Fi</span><span style="font-size:12px">X</span></div><div class="q"><i></i></div><div class="tb"><ui-icon name="saveic"></ui-icon></div>
<div class="e"><div class="n">1
1
1
1</div><div class="v"><ui-icon name="up" w="8"></ui-icon><b></b><ui-icon name="chev" w="8" style="margin-bottom:7px"></ui-icon></div></div><div class="f"><ui-label w="82">Normal text file</ui-label><ui-label w="136" style="margin-left:756px">length : 3,688    lines : 106</ui-label><ui-label w="144" style="margin-left:92px">Ln : 106    Col : 12    Pos : 3,688</ui-label><ui-label w="88" style="margin-left:113px">Windows (CR LF)</ui-label><ui-label w="34" style="margin-left:24px">UTF-8</ui-label><ui-label w="17" style="margin-left:84px">INS</ui-label></div>`);

def("task-bar",`<style>:host{display:flex;height:38px;background:#182c31;align-items:center;color:#d8d8d8;font-size:13px}
div{height:38px;display:flex;align-items:center;justify-content:center;box-sizing:border-box;flex:none;padding-bottom:2px}.s{width:343px;background:#f3f3f3;color:#222;justify-content:flex-start;padding-left:12px;gap:11px;font-size:15px;border-bottom:1px solid #aaa}.a{width:40px;margin:0 4.500px;border-bottom:3px solid #76b9ed;padding:0}.z{width:49px;margin:0;background:#51676b}.t{margin-left:auto;gap:11px}.c{flex-direction:column;width:60px;margin-left:9px;line-height:18px;font-size:12px}</style>
<div style="width:48px"><ui-icon name="win10"></ui-icon></div><div class="s"><ui-icon name="search"></ui-icon><ui-label w="128">Type here to search</ui-label></div>
<div style="width:49px"><ui-icon name="task"></ui-icon></div><div style="width:2px"></div><div class="a"><ui-icon name="folder"></ui-icon></div><div class="a"><ui-icon name="obs"></ui-icon></div><div class="a"><ui-icon name="chrome" w="22"></ui-icon></div><div class="a"><ui-icon name="npp" w="20"></ui-icon></div><div class="a z"><ui-icon name="zoom" w="22"></ui-icon></div>
<div class="t"><ui-icon name="caret"></ui-icon><ui-icon name="mic"></ui-icon><ui-icon name="batt" style="margin-left:-1px"></ui-icon><ui-icon name="wifi"></ui-icon><ui-icon name="spk10" style="margin-left:-4px"></ui-icon><ui-label w="24" style="margin-left:-2px">ENG</ui-label></div><div class="c"><ui-label w="27">07:37</ui-label><ui-label w="57">03-04-2021</ui-label></div><div style="width:48px;margin:0 10px 0 2px"><ui-icon name="notif" w="17"></ui-icon></div>`);

/* media player controls, above everything */
def("video-controls",`<style>:host{position:absolute;inset:0;color:#fff;display:flex;flex-direction:column;justify-content:space-between;background:linear-gradient(transparent 690px,#0003 740px,#0005 768px,#00000073 800px,#0000008c 840px,#0000009c 865px,#000000a8 900px)}
.b{width:48px;height:32px;background:#0000006b;display:flex;align-items:center;justify-content:center;box-sizing:border-box;padding:0 0 2px 0}.p{height:121px}.k{height:20px;margin:0 24px;display:flex;align-items:center}.k i{height:2px;background:#3a96dd;width:154px}.k b{width:20px;height:20px;box-sizing:border-box;border:2px solid #3a96dd;border-radius:50%}.k u{height:2px;background:#ffffff38;flex:1}
.t{display:flex;justify-content:space-between;margin:2px 24px 0;font-size:12px;height:18px;align-items:center}.c{display:grid;grid-template-columns:1fr 124px 1fr;align-items:center;padding:0 39px 0 38px;height:32px;margin-top:10px}.c div{display:flex;align-items:center;gap:30px}.c .m{justify-content:space-between;position:relative;left:.5px}.c .r{justify-content:flex-end}</style>
<div class="b"><ui-icon name="back"></ui-icon></div><div class="p"><div class="k"><i></i><b></b><u></u></div><div class="t"><ui-label w="44">00:06:15</ui-label><ui-label w="44">00:55:54</ui-label></div>
<div class="c"><div><ui-icon name="vol"></ui-icon><ui-icon name="cc"></ui-icon></div><div class="m"><ui-icon name="b10"></ui-icon><ui-icon name="play"></ui-icon><ui-icon name="f30"></ui-icon></div><div class="r"><ui-icon name="pen"></ui-icon><ui-icon name="pip"></ui-icon><ui-icon name="shrink"></ui-icon><ui-icon name="dots"></ui-icon></div></div></div>`);
def("desk-top",`<style>:host{display:flex;flex-direction:column;position:relative;width:1600px;height:900px;overflow:hidden}</style><editor-window></editor-window><task-bar></task-bar><zoom-window></zoom-window><video-controls></video-controls>`);

/* single-line label squeezed or stretched to a given width; registered last so every host is already laid out */
def("ui-label",e=>`<style>:host{display:inline-block;flex:none;width:${e.getAttribute("w")}px;white-space:pre;text-align:left}span{display:inline-block;transform-origin:0 50%}</style><span><slot></slot></span>`,(e,r)=>{
  const s=r.querySelector("span"),w=s.offsetWidth; if(w)s.style.transform=`scaleX(${e.getAttribute("w")/w})`;
});
</script>
</body>
</html>
